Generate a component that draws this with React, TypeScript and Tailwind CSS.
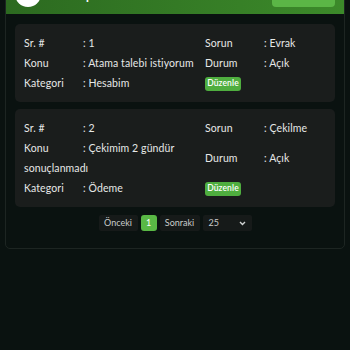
import React from "react";

type Ticket = {
  no: number;
  konu: string;
  kategori: string;
  sorun: string;
  durum: string;
};

const tickets: Ticket[] = [
  { no: 1, konu: "Atama talebi istiyorum", kategori: "Hesabim", sorun: "Evrak", durum: "Açık" },
  { no: 2, konu: "Çekimim 2 gündür sonuçlanmadı", kategori: "Ödeme", sorun: "Çekilme", durum: "Açık" },
];

const Cell: React.FC<{ label: string; value: React.ReactNode }> = ({ label, value }) => (
  <div className="leading-[20px]">
    <span className="inline-block w-[59px]">{label}</span>
    <span>: {value}</span>
  </div>
);

const TicketCard: React.FC<{ t: Ticket }> = ({ t }) => (
  <div className="bg-[#1a1d1c] rounded-[5px] px-[9px] py-[9px] text-[10.5px] text-[#e6e8e7] tracking-[0.1px]">
    <div className="flex items-center">
      <div className="w-[181px]">
        <Cell label="Sr. #" value={t.no} />
      </div>
      <div className="flex-1">
        <Cell label="Sorun" value={t.sorun} />
      </div>
    </div>
    <div className="flex items-center">
      <div className="w-[181px]">
        <Cell label="Konu" value={t.konu} />
      </div>
      <div className="flex-1">
        <Cell label="Durum" value={t.durum} />
      </div>
    </div>
    <div className="flex items-center">
      <div className="w-[181px]">
        <Cell label="Kategori" value={t.kategori} />
      </div>
      <div className="flex-1 h-[20px] flex items-center pt-[1px]">
        <button className="bg-[#4fae3f] text-white text-[8.5px] font-semibold rounded-[3px] h-[14px] w-[36px] leading-none">
          Düzenle
        </button>
      </div>
    </div>
  </div>
);

const App: React.FC = () => {
  return (
    <div
      className="min-h-screen w-full bg-[#0a1210] overflow-hidden"
      style={{ fontFamily: "Lato, 'Noto Sans', sans-serif" }}
    >
      <div className="mx-[5px] -mt-[27px] border border-[#1d2522] rounded-[5px] pb-[17px]">
        {/* Header */}
        <div className="h-[40px] bg-gradient-to-r from-[#2c6a20] to-[#3c8a2a] rounded-t-[5px] flex items-center justify-between px-[9px]">
          <div className="flex items-center gap-[20px]">
            <div className="w-[26px] h-[26px] rounded-full bg-white" />
            <span className="text-white text-[14px] font-semibold">Taleplerim</span>
          </div>
          <button className="w-[63px] h-[26px] rounded-[4px] bg-[#5bb646] text-white text-[10px]">
            Yeni Talep
          </button>
        </div>

        <div className="px-[9px] pt-[10px] flex flex-col gap-[7px]">
          {tickets.map((t) => (
            <TicketCard key={t.no} t={t} />
          ))}
        </div>

        {/* Pagination */}
        <div className="flex justify-center items-center gap-[3px] mt-[8px] text-[9px] text-[#c9cccb]">
          <button className="h-[16px] w-[39px] bg-[#161a19] rounded-[2px]">Önceki</button>
          <button className="h-[16px] w-[16px] bg-[#59b845] text-white rounded-[3px]">1</button>
          <button className="h-[16px] w-[40px] bg-[#161a19] rounded-[2px]">Sonraki</button>
          <div className="h-[16px] w-[49px] bg-[#161a19] rounded-[2px] flex items-center justify-between px-[6px]">
            <span>25</span>
            <svg width="7" height="5" viewBox="0 0 7 5" fill="none">
              <path d="M1 1l2.5 2.5L6 1" stroke="#d0d3d2" strokeWidth="1.4" />
            </svg>
          </div>
        </div>
      </div>
    </div>
  );
};

export default App;
